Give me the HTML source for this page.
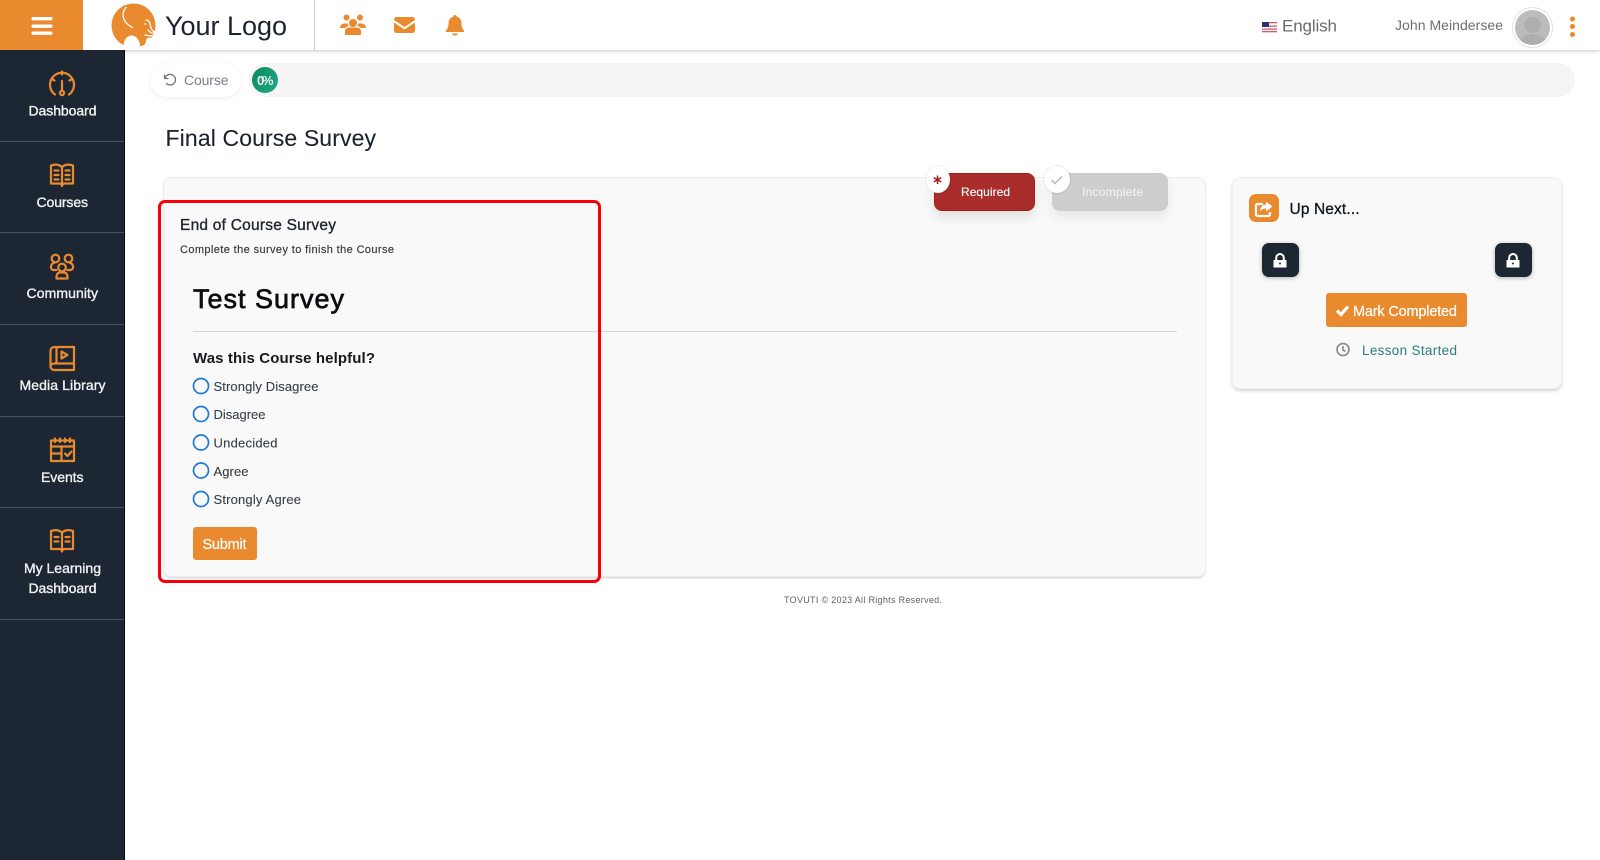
<!DOCTYPE html>
<html lang="en"><head><meta charset="utf-8"><title>Final Course Survey</title>
<style>
html,body{margin:0;padding:0;background:#fff;width:1600px;height:860px;overflow:hidden;font-family:"Liberation Sans",sans-serif}
.b{position:absolute;box-sizing:border-box}
svg.o{position:absolute;left:0;top:0;z-index:10}
svg text{font-family:"Liberation Sans",sans-serif}
.ic{fill:none;stroke:#e88a2d;stroke-width:2.2;stroke-linecap:round;stroke-linejoin:round}
.nav{fill:#f1f2f3;font-size:14px;stroke:#f1f2f3;stroke-width:.35}
.r{fill:#3a3f47;font-size:13px;stroke:#3a3f47;stroke-width:.12}
</style></head><body>
<div class="b" style="left:0;top:0;width:1600px;height:50px;background:#fff;box-shadow:0 1px 4px rgba(0,0,0,.22)"></div>
<div class="b" style="left:0;top:0;width:83px;height:50px;background:#e88a2d"></div>
<div class="b" style="left:314px;top:0;width:1px;height:50px;background:#cfcfcf"></div>
<div class="b" style="left:0;top:50px;width:125px;height:810px;background:#1d2733;border-right:1px solid #05080c"></div>
<div class="b" style="left:0;top:141px;width:124px;height:1px;background:#4a525c"></div>
<div class="b" style="left:0;top:232px;width:124px;height:1px;background:#4a525c"></div>
<div class="b" style="left:0;top:324px;width:124px;height:1px;background:#4a525c"></div>
<div class="b" style="left:0;top:416px;width:124px;height:1px;background:#4a525c"></div>
<div class="b" style="left:0;top:507px;width:124px;height:1px;background:#4a525c"></div>
<div class="b" style="left:0;top:619px;width:124px;height:1px;background:#4a525c"></div>

<div class="b" style="left:150px;top:63px;width:91px;height:34px;border-radius:17px;background:#fff;box-shadow:0 1px 5px rgba(0,0,0,.08)"></div>
<div class="b" style="left:249px;top:63px;width:1326px;height:34px;border-radius:17px;background:#f5f5f5"></div>
<div class="b" style="left:252px;top:67px;width:26px;height:26px;border-radius:13px;background:linear-gradient(120deg,#0b8a60,#22a884)"></div>

<div class="b" style="left:163px;top:177px;width:1043px;height:400px;border-radius:8px;background:#f9f9f9;border:1px solid #ececec;box-shadow:0 2px 2px -1px rgba(0,0,0,.2)"></div>
<div class="b" style="left:193px;top:331px;width:984px;height:1px;background:#d8d8d8"></div>
<div class="b" style="left:158px;top:200px;width:443px;height:383px;border:3px solid #f8000a;border-radius:7px"></div>

<div class="b" style="left:934px;top:173px;width:101px;height:38px;border-radius:8px;background:#a92e2b;border:1px solid #a61d18;box-shadow:0 6px 12px rgba(0,0,0,.1)"></div>
<div class="b" style="left:926px;top:166px;width:24px;height:27px;border-radius:50%;background:#fff;box-shadow:0 0 2px rgba(0,0,0,.15)"></div>
<div class="b" style="left:1052px;top:173px;width:116px;height:38px;border-radius:8px;background:#cdcdcd;box-shadow:0 6px 12px rgba(0,0,0,.08)"></div>
<div class="b" style="left:1044px;top:166px;width:26px;height:27px;border-radius:50%;background:#fff;box-shadow:0 0 2px rgba(0,0,0,.2)"></div>

<div class="b" style="left:1232px;top:177px;width:330px;height:212px;border-radius:8px;background:#f9f9f9;border:1px solid #efefef;box-shadow:0 2px 3px rgba(0,0,0,.16)"></div>
<div class="b" style="left:1249px;top:194px;width:30px;height:28px;border-radius:7px;background:#e88a2d"></div>
<div class="b" style="left:1262px;top:243px;width:37px;height:34px;border-radius:7px;background:#1d2733;box-shadow:0 1px 4px rgba(0,0,0,.3)"></div>
<div class="b" style="left:1495px;top:243px;width:37px;height:34px;border-radius:7px;background:#1d2733;box-shadow:0 1px 4px rgba(0,0,0,.3)"></div>
<div class="b" style="left:1326px;top:293px;width:141px;height:34px;border-radius:3px;background:#e88a2d"></div>
<div class="b" style="left:193px;top:527px;width:64px;height:33px;border-radius:3px;background:#e88a2d"></div>

<div class="b" style="left:1512px;top:7px;width:41px;height:41px;border-radius:50%;background:#fff;border:1px solid #e2e2e2"></div>
<div class="b" style="left:1515px;top:10px;width:35px;height:35px;border-radius:50%;background:#bcbcbc;overflow:hidden">
  <div class="b" style="left:9px;top:7px;width:17px;height:16px;border-radius:50%;background:#aeaeae"></div>
  <div class="b" style="left:3px;top:24px;width:29px;height:22px;border-radius:50%;background:#aeaeae"></div>
</div>

<svg class="o" width="1600" height="860" viewBox="0 0 1600 860" xmlns="http://www.w3.org/2000/svg">
<!-- hamburger -->
<g fill="#fff"><rect x="31.500" y="17" width="21" height="3.400" rx="1.600"/><rect x="31.500" y="24.500" width="21" height="3.400" rx="1.600"/><rect x="31.500" y="31.500" width="21" height="3.400" rx="1.600"/></g>
<!-- logo -->
<circle cx="133.500" cy="25.500" r="22" fill="#e88a2d"/>
<path d="M123.500 48c-.5-7 3-12.500 8-12.500s9 5.500 8.500 12.500z" fill="#fff"/>
<path d="M126 7.500c-3 3-3.500 8-2 12 2 4 5 6.500 8.500 8" fill="none" stroke="#fff" stroke-width="1.300" stroke-linecap="round"/>
<path d="M146 20c2.500 0 4 2.500 4.500 6 .5 3 2 5.500 5.500 7-3 1-6-.5-8-3" fill="none" stroke="#fff" stroke-width="1.300" stroke-linecap="round" stroke-linejoin="round"/>
<path d="M145 35c3.500 1 7.500 1 11 .5" fill="none" stroke="#fff" stroke-width="1.200" stroke-linecap="round"/>
<circle cx="145" cy="24" r=".9" fill="#fff"/>
<path d="M147 38l10-1v10h-13z" fill="#fff"/>
<text x="165" y="35" font-size="27" fill="#1b2230" textLength="122" lengthAdjust="spacing">Your Logo</text>

<!-- header icons -->
<g fill="#e88a2d">
<circle cx="346.500" cy="17.500" r="3"/><circle cx="360" cy="17.500" r="3"/><circle cx="353" cy="23" r="4"/>
<path d="M340 28c0-2.500 2-4.500 4.500-4.500h3c.3 1 .8 1.700 1.500 2.500-2 .5-3 1.300-4 2zM366 28c0-2.500-2-4.500-4.500-4.500h-3c-.3 1-.8 1.700-1.500 2.500 2 .5 3 1.300 4 2z"/>
<path d="M345 35v-3.500c0-2.500 2-4 4.500-4h7c2.500 0 4.500 1.500 4.500 4V35z"/>
<path d="M394 20c0-1.700 1-3 3-3h15c2 0 3 1.300 3 3l-10.500 7z"/>
<path d="M394 22.500l10.500 7 10.500-7V30c0 2-1 3-3 3h-15c-2 0-3-1-3-3z"/>
<path d="M455 15c1 0 1.700.7 1.700 1.600 3 .8 4.800 3.400 4.800 6.600 0 3.800 1 5.600 2.500 7.300v1.500h-18v-1.500c1.500-1.700 2.500-3.500 2.500-7.300 0-3.200 1.800-5.800 4.800-6.600 0-.9.700-1.600 1.700-1.600z"/>
<path d="M452 33.500h6a3 2 0 0 1-6 0z"/>
</g>

<!-- flag -->
<rect x="1262" y="22" width="15" height="10" fill="#fff"/>
<g fill="#cf5a63"><rect x="1262" y="22" width="15" height="1.300"/><rect x="1262" y="25.500" width="15" height="1.300"/><rect x="1262" y="28.500" width="15" height="1.300"/><rect x="1262" y="31" width="15" height="1.300"/></g>
<rect x="1262" y="22" width="7" height="5" fill="#2b2f78"/>
<text x="1282" y="31.500" font-size="17" fill="#6b6b6b" textLength="55" lengthAdjust="spacing">English</text>
<text x="1395" y="30" font-size="14" fill="#6e6e6e" textLength="108" lengthAdjust="spacing">John Meindersee</text>
<g fill="#ee8a1f"><circle cx="1572.500" cy="19" r="2.500"/><circle cx="1572.500" cy="26.500" r="2.500"/><circle cx="1572.500" cy="34.500" r="2.500"/></g>

<!-- Dashboard icon -->
<g class="ic">
<path d="M55 94.500a12 12 0 1 1 14 0"/>
<path d="M62 71.500v3M52 79l2.500 1.500M72 79l-2.500 1.500M62 81v9"/>
<circle cx="62" cy="93" r="2.100"/>
</g>
<text class="nav" x="28.500" y="115.500" textLength="68" lengthAdjust="spacing">Dashboard</text>

<!-- Courses icon -->
<g class="ic" stroke-linejoin="miter">
<path d="M51 165.500c4-1.500 8-1 11 1.500 3-2.500 7-3 11-1.500v18h-8.500c-1 0-2 1-2.500 2-.5-1-1.500-2-2.500-2H51zM62 167v19"/>
<path d="M54.500 170.500h4M54.500 175h4M54.500 179.500h4M65.500 170.500h4M65.500 175h4M65.500 179.500h4"/>
</g>
<text class="nav" x="36.500" y="207" textLength="51.500" lengthAdjust="spacing">Courses</text>

<!-- Community icon -->
<g class="ic">
<circle cx="55.500" cy="258.500" r="3.800"/><circle cx="68.500" cy="258.500" r="3.800"/><circle cx="62" cy="267.500" r="3.800"/>
<path d="M56.500 270H54c-2.500 0-3.500-2-3-4 .5-1.500 1.500-3 3-3M67.500 270H70c2.500 0 3.500-2 3-4-.5-1.500-1.500-3-3-3"/>
<path d="M56.500 278.500v-2c0-2 1.500-4 3.500-4h4c2 0 3.500 2 3.500 4v2z"/>
</g>
<text class="nav" x="26.500" y="298" textLength="71.500" lengthAdjust="spacing">Community</text>

<!-- Media icon -->
<g class="ic">
<path d="M74 347H54.500c-2.500 0-4 1.500-4 4v15c0 2.500 1.500 4 4 4H74v-6.500H54.500c-2.500 0-4 1.500-4 3.500"/>
<path d="M74 347v16.500M56.500 347.500v15"/>
<path d="M61.500 351.500l6 3.500-6 3.500z"/>
</g>
<text class="nav" x="19.500" y="390" textLength="86" lengthAdjust="spacing">Media Library</text>

<!-- Events icon -->
<g class="ic" stroke-linejoin="miter">
<rect x="51" y="440.500" width="23" height="20.500"/>
<path d="M51 446.500h23M51 453.500h10M61.500 446.500v14.500"/>
<path d="M55 438.500v3.500M60 438.500v3.500M65 438.500v3.500M70 438.500v3.500"/>
<path d="M65 453.500l2.500 2.500 4-4.500"/>
</g>
<text class="nav" x="41" y="482" textLength="42.500" lengthAdjust="spacing">Events</text>

<!-- Learning icon -->
<g class="ic" stroke-linejoin="miter">
<path d="M51 531c4-1.500 8-1 11 1.500 3-2.500 7-3 11-1.500v18h-8.500c-1 0-2 1-2.500 2-.5-1-1.500-2-2.500-2H51zM62 532.500v19"/>
<path d="M54.500 537h4M54.500 541.500h4M65.500 537h4M65.500 541.500h4"/>
</g>
<text class="nav" x="24" y="573" textLength="77" lengthAdjust="spacing">My Learning</text>
<text class="nav" x="28.500" y="593" textLength="68" lengthAdjust="spacing">Dashboard</text>

<!-- breadcrumb -->
<g fill="none" stroke="#6f747b" stroke-width="1.300" stroke-linecap="round" stroke-linejoin="round">
<path d="M165 78.500a5.300 5.300 0 1 1 1.500 5"/><path d="M164.500 75v3.500H168"/>
</g>
<text x="184" y="85" font-size="14" fill="#7a7e85" textLength="44.500" lengthAdjust="spacing">Course</text>
<text x="257" y="85" font-size="13" font-weight="700" fill="#e8f5f0" textLength="16.500" lengthAdjust="spacing">0%</text>

<text x="165.500" y="146" font-size="23" fill="#1b2230" stroke="#1b2230" stroke-width=".1" textLength="210.500" lengthAdjust="spacing">Final Course Survey</text>

<!-- status -->
<path d="M937.500 175.500v8.500M933.800 177.600l7.400 4.300M941.200 177.600l-7.400 4.300" fill="none" stroke="#a61d18" stroke-width="1.500"/>
<text x="961" y="196" font-size="12" fill="#fff" stroke="#fff" stroke-width=".12" textLength="49" lengthAdjust="spacing">Required</text>
<path d="M1051.500 180l3.500 3.500 7-7" fill="none" stroke="#b5b5b5" stroke-width="1.400"/>
<text x="1082" y="196" font-size="12" fill="#f3f3f3" stroke="#f3f3f3" stroke-width=".12" textLength="61" lengthAdjust="spacing">Incomplete</text>

<!-- survey -->
<text x="180" y="230" font-size="15.500" fill="#23272d" stroke="#23272d" stroke-width=".35" textLength="156" lengthAdjust="spacing">End of Course Survey</text>
<text x="180" y="253" font-size="11" fill="#33363d" stroke="#33363d" stroke-width=".15" textLength="214" lengthAdjust="spacing">Complete the survey to finish the Course</text>
<text x="193" y="308" font-size="27" fill="#0b0d10" stroke="#0b0d10" stroke-width=".7" textLength="151" lengthAdjust="spacing">Test Survey</text>
<text x="193" y="363" font-size="15" font-weight="700" fill="#16191e" textLength="182" lengthAdjust="spacing">Was this Course helpful?</text>
<g fill="none" stroke="#1a78db" stroke-width="1.700">
<circle cx="201" cy="386" r="7.500"/><circle cx="201" cy="414" r="7.500"/><circle cx="201" cy="442.500" r="7.500"/><circle cx="201" cy="470.500" r="7.500"/><circle cx="201" cy="499" r="7.500"/>
</g>
<text class="r" x="213.500" y="391" textLength="105" lengthAdjust="spacing">Strongly Disagree</text>
<text class="r" x="213.500" y="419" textLength="52" lengthAdjust="spacing">Disagree</text>
<text class="r" x="213.500" y="447.500" textLength="64" lengthAdjust="spacing">Undecided</text>
<text class="r" x="213.500" y="476" textLength="35" lengthAdjust="spacing">Agree</text>
<text class="r" x="213.500" y="504" textLength="87.500" lengthAdjust="spacing">Strongly Agree</text>
<text x="202.500" y="549" font-size="14.500" fill="#fff" stroke="#fff" stroke-width=".2" textLength="44" lengthAdjust="spacing">Submit</text>
<text x="784" y="603" font-size="9" fill="#5d6167" textLength="158" lengthAdjust="spacing">TOVUTI © 2023 All Rights Reserved.</text>

<!-- right card -->
<path d="M1263 204h-5c-1.300 0-2 .8-2 2v8c0 1.300.7 2 2 2h10c1.300 0 2-.7 2-2v-2" fill="none" stroke="#fff" stroke-width="2.200"/>
<path d="M1266 201.500l6.500 5-6.500 5v-3c-3 0-5 1-6 3.500 0-4.500 2.500-7.500 6-7.500z" fill="#fff"/>
<text x="1289.500" y="214" font-size="15.500" fill="#11151a" stroke="#11151a" stroke-width=".3" textLength="70" lengthAdjust="spacing">Up Next...</text>
<g fill="#fff">
<path fill-rule="evenodd" d="M1273.500 260h1.700v-2.200a4.800 4.800 0 0 1 9.600 0v2.200h1.700v7.500h-13zM1277.200 260h5.600v-2.200a2.800 2.800 0 0 0-5.600 0z"/>
<path fill-rule="evenodd" d="M1506.500 260h1.700v-2.200a4.800 4.800 0 0 1 9.600 0v2.200h1.700v7.500h-13zM1510.200 260h5.600v-2.200a2.800 2.800 0 0 0-5.600 0z"/>
</g>
<circle cx="1280" cy="263.500" r="1" fill="#1d2733"/><circle cx="1513" cy="263.500" r="1" fill="#1d2733"/>
<path d="M1337 310.500l4 4 7-8" fill="none" stroke="#fff" stroke-width="3.200"/>
<text x="1353" y="316" font-size="14.500" fill="#fff" stroke="#fff" stroke-width=".2" textLength="104" lengthAdjust="spacing">Mark Completed</text>
<g fill="none" stroke="#8d8d8d" stroke-width="1.700"><circle cx="1343" cy="349.500" r="6"/><path d="M1343 346v4l2.500 1.500"/></g>
<text x="1362" y="355" font-size="13.500" fill="#2a7f7a" textLength="95" lengthAdjust="spacing">Lesson Started</text>
</svg>
</body></html>
